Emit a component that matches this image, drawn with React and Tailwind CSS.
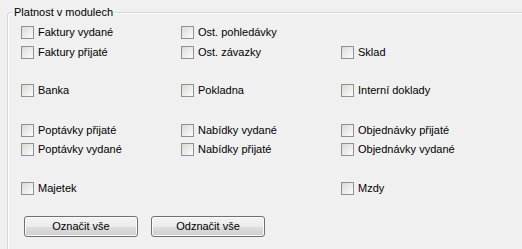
import React from 'react';

const rows = [
  { mt: 'mt-[13px]', items: ['Faktury vydané', 'Ost. pohledávky', null] },
  { mt: 'mt-[7px]', items: ['Faktury přijaté', 'Ost. závazky', 'Sklad'] },
  { mt: 'mt-[25px]', items: ['Banka', 'Pokladna', 'Interní doklady'] },
  { mt: 'mt-[27px]', items: ['Poptávky přijaté', 'Nabídky vydané', 'Objednávky přijaté'] },
  { mt: 'mt-[6px]', items: ['Poptávky vydané', 'Nabídky přijaté', 'Objednávky vydané'] },
  { mt: 'mt-[26px]', items: ['Majetek', null, 'Mzdy'] },
];

function Check({ label }) {
  return (
    <label className="flex items-center gap-[4px] h-[13px]">
      <span className="w-[13px] h-[13px] shrink-0 border border-[#8f9091] bg-[linear-gradient(135deg,#d9d9d4_0%,#f2f2f0_70%,#ffffff_100%)]" />
      <span className="leading-[13px] whitespace-nowrap">{label}</span>
    </label>
  );
}

function Button({ children }) {
  return (
    <button className="w-[114px] h-[21px] rounded-[3px] border border-[#707070] shadow-[inset_0_0_0_1px_#fbfbfb] bg-[linear-gradient(to_bottom,#f3f3f3_0%,#ebebeb_50%,#dddddd_51%,#cfcfcf_100%)] text-[11px] leading-[13px] text-black">
      {children}
    </button>
  );
}

export default function App() {
  return (
    <div className="h-[249px] w-[522px] overflow-hidden bg-[#f0f0f0] pt-[12px] pl-[7px] text-[11px] text-black font-['Liberation_Sans',Arial,sans-serif]">
      <div className="relative h-[300px] border-t border-l border-[#d0d9de] rounded-tl-[4px] shadow-[inset_1px_1px_0_#ffffff] pl-[13px]">
        <span className="absolute top-[-7px] left-[4px] px-[2px] bg-[#f0f0f0] leading-[13px]">Platnost v modulech</span>

        {rows.map((row, i) => (
          <div key={i} className={`grid grid-cols-[160px_160px_160px] ${row.mt}`}>
            {row.items.map((item, j) => (
              <div key={j}>{item && <Check label={item} />}</div>
            ))}
          </div>
        ))}

        <div className="flex gap-[13px] ml-[3px] mt-[21px]">
          <Button>Označit vše</Button>
          <Button>Odznačit vše</Button>
        </div>
      </div>
    </div>
  );
}
